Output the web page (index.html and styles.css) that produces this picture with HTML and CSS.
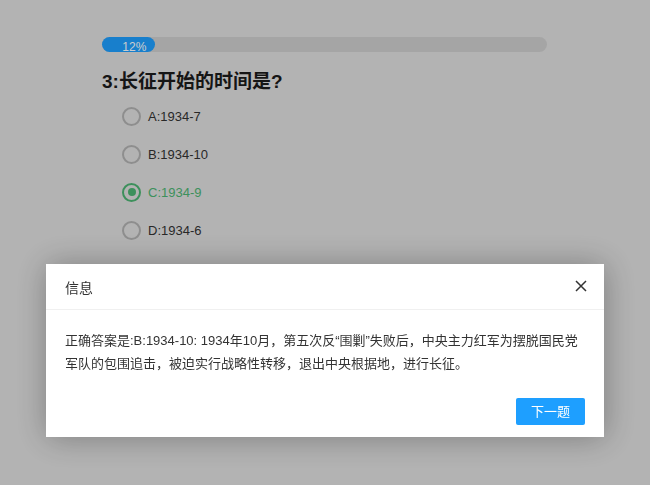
FILE: index.html
```html
<!DOCTYPE html>
<html lang="zh-CN">
<head>
<meta charset="utf-8">
<title>答题</title>
<link rel="stylesheet" href="styles.css">
</head>
<body>
<div class="quiz">
  <div class="progress">
    <div class="progress-bar" style="width:12%"><span class="progress-text">12%</span></div>
  </div>
  <h2 class="question">3:长征开始的时间是?</h2>
  <ul class="options">
    <li class="option"><span class="radio"></span><span class="label">A:1934-7</span></li>
    <li class="option"><span class="radio"></span><span class="label">B:1934-10</span></li>
    <li class="option checked"><span class="radio"></span><span class="label">C:1934-9</span></li>
    <li class="option"><span class="radio"></span><span class="label">D:1934-6</span></li>
  </ul>
</div>

<div class="shade"></div>
<div class="layer">
  <div class="layer-title">
    <span>信息</span>
    <span class="layer-close">
      <svg width="12" height="12" viewBox="0 0 12 12"><path d="M1 1 L11 11 M11 1 L1 11" stroke="#333" stroke-width="1.5" fill="none"/></svg>
    </span>
  </div>
  <div class="layer-content">正确答案是:B:1934-10: 1934年10月，第五次反“围剿”失败后，中央主力红军为摆脱国民党军队的包围追击，被迫实行战略性转移，退出中央根据地，进行长征。</div>
  <div class="layer-btns"><a class="layer-btn">下一题</a></div>
</div>
</body>
</html>
```

FILE: styles.css
```css
html, body {
  margin: 0;
  padding: 0;
}
body {
  background: #e0e0e0;
  font-family: "Liberation Sans", "Noto Sans CJK SC", sans-serif;
  color: #333;
  width: 650px;
  height: 485px;
  overflow: hidden;
}
.quiz {
  width: 445px;
  margin: 0 0 0 102px;
  padding-top: 37px;
}
.progress {
  height: 15px;
  border-radius: 8px;
  background: #cfcfcf;
  position: relative;
}
.progress-bar {
  height: 15px;
  border-radius: 8px;
  background: #1e9fff;
  box-sizing: border-box;
  text-align: right;
  padding-right: 9px;
}
.progress-text {
  color: #fff;
  font-size: 12px;
  line-height: 15px;
}
.question {
  margin: 17px 0 0;
  font-size: 19px;
  line-height: 26px;
  font-weight: bold;
  color: #1b1b1b;
}
.options {
  list-style: none;
  margin: 2px 0 0;
  padding: 0 0 0 20px;
}
.option {
  height: 38px;
  display: flex;
  align-items: center;
  gap: 7px;
  font-size: 13px;
  color: #333;
}
.radio {
  width: 19px;
  height: 19px;
  box-sizing: border-box;
  border: 2px solid #b2b2b2;
  border-radius: 50%;
  display: flex;
  align-items: center;
  justify-content: center;
}
.option.checked {
  color: #4db573;
}
.option.checked .radio {
  border-color: #4db573;
}
.option.checked .radio::after {
  content: "";
  width: 8px;
  height: 8px;
  border-radius: 50%;
  background: #4db573;
}
.shade {
  position: fixed;
  inset: 0;
  background: rgba(0, 0, 0, 0.2);
}
.layer {
  position: fixed;
  left: 46px;
  top: 264px;
  width: 558px;
  background: #fff;
  box-shadow: 1px 1px 30px rgba(0, 0, 0, 0.3);
}
.layer-title {
  height: 45px;
  border-bottom: 1px solid #f0f0f0;
  display: flex;
  align-items: center;
  justify-content: space-between;
  padding: 0 17px 0 19px;
  font-size: 14px;
  color: #333;
}
.layer-close {
  display: flex;
  width: 12px;
  height: 12px;
  margin-bottom: 1px;
}
.layer-content {
  padding: 19px 20px 21px 19px;
  font-size: 13px;
  line-height: 23px;
  color: #333;
}
.layer-btns {
  display: flex;
  justify-content: flex-end;
  padding: 2px 19px 12px;
}
.layer-btn {
  display: block;
  height: 27px;
  line-height: 27px;
  padding: 0 15px;
  background: #1e9fff;
  color: #fff;
  font-size: 13px;
  border-radius: 2px;
}
```
